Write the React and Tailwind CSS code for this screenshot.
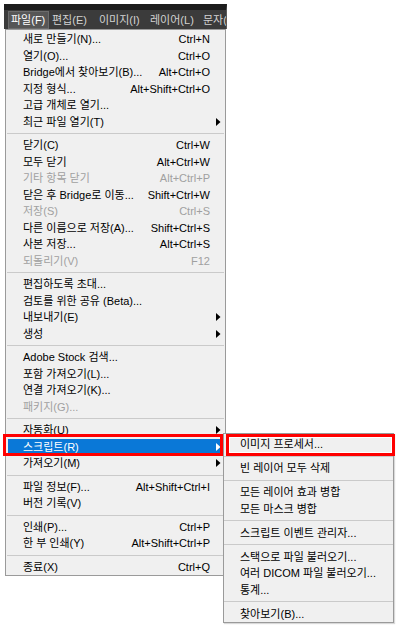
import React from 'react'

// Photoshop "파일" menu with the 스크립트 submenu open
const mainGroups = [
  [
    { label: '새로 만들기(N)...', keys: 'Ctrl+N' },
    { label: '열기(O)...', keys: 'Ctrl+O' },
    { label: 'Bridge에서 찾아보기(B)...', keys: 'Alt+Ctrl+O' },
    { label: '지정 형식...', keys: 'Alt+Shift+Ctrl+O' },
    { label: '고급 개체로 열기...' },
    { label: '최근 파일 열기(T)', sub: true },
  ],
  [
    { label: '닫기(C)', keys: 'Ctrl+W' },
    { label: '모두 닫기', keys: 'Alt+Ctrl+W' },
    { label: '기타 항목 닫기', keys: 'Alt+Ctrl+P', off: true },
    { label: '닫은 후 Bridge로 이동...', keys: 'Shift+Ctrl+W' },
    { label: '저장(S)', keys: 'Ctrl+S', off: true },
    { label: '다른 이름으로 저장(A)...', keys: 'Shift+Ctrl+S' },
    { label: '사본 저장...', keys: 'Alt+Ctrl+S' },
    { label: '되돌리기(V)', keys: 'F12', off: true },
  ],
  [
    { label: '편집하도록 초대...' },
    { label: '검토를 위한 공유 (Beta)...' },
    { label: '내보내기(E)', sub: true },
    { label: '생성', sub: true },
  ],
  [
    { label: 'Adobe Stock 검색...' },
    { label: '포함 가져오기(L)...' },
    { label: '연결 가져오기(K)...' },
    { label: '패키지(G)...', off: true },
  ],
  [
    { label: '자동화(U)', sub: true },
    { label: '스크립트(R)', sub: true, active: true },
    { label: '가져오기(M)', sub: true },
  ],
  [
    { label: '파일 정보(F)...', keys: 'Alt+Shift+Ctrl+I' },
    { label: '버전 기록(V)' },
  ],
  [
    { label: '인쇄(P)...', keys: 'Ctrl+P' },
    { label: '한 부 인쇄(Y)', keys: 'Alt+Shift+Ctrl+P' },
  ],
  [{ label: '종료(X)', keys: 'Ctrl+Q' }],
]

const subGroups = [
  ['이미지 프로세서...'],
  ['빈 레이어 모두 삭제'],
  ['모든 레이어 효과 병합', '모든 마스크 병합'],
  ['스크립트 이벤트 관리자...'],
  ['스택으로 파일 불러오기...', '여러 DICOM 파일 불러오기...', '통계...'],
  ['찾아보기(B)...'],
]

const menuBar = [
  { label: '파일(F)', w: 'w-[41px]', open: true },
  { label: '편집(E)', w: 'w-[47px]' },
  { label: '이미지(I)', w: 'w-[51px]' },
  { label: '레이어(L)', w: 'w-[53px]' },
  { label: '문자(Y)', w: 'w-[50px]' },
]

const Arrow = ({ white }) => (
  <svg width="5" height="8" viewBox="0 0 5 8">
    <polygon points="0,0 4.5,4 0,8" fill={white ? '#ffffff' : '#000000'} />
  </svg>
)

const Separator = ({ className = '' }) => (
  <div className={`flex items-center ${className}`}>
    <div className="h-px w-full bg-[#cacaca]" />
  </div>
)

const MenuRow = ({ item }) => {
  const tone = item.active
    ? 'bg-[#0a78d7] text-white'
    : item.off
      ? 'text-[#a0a0a0]'
      : 'text-black'
  return (
    <div className={`mx-[2px] flex h-[16.5px] items-center pl-[15px] leading-[16.5px] ${tone}`}>
      <span className="flex-1 whitespace-nowrap">{item.label}</span>
      <span className="whitespace-nowrap">{item.keys}</span>
      <span className="flex w-[13px] pl-[6px]">{item.sub && <Arrow white={item.active} />}</span>
    </div>
  )
}

export default function App() {
  return (
    <div
      className="relative h-[627px] w-[400px] overflow-hidden bg-white pt-[4px] text-[11px]"
      style={{ fontFamily: '"Liberation Sans", "Noto Sans CJK KR", sans-serif' }}
    >
      {/* Menu bar */}
      <div className="ml-[4px] flex h-[25px] w-[223px] overflow-hidden whitespace-nowrap border-t-[6px] border-r border-[#1d1d1d] border-r-[#5a5a5a] bg-[#3b3b3b] pl-[4px] pt-[1px] text-[#d2d2d2]">
        {menuBar.map((m) => (
          <div
            key={m.label}
            className={`h-[18px] shrink-0 border px-[2px] leading-[16px] ${m.w} ${
              m.open ? 'border-[#6c6c6c] bg-[#565656] text-white' : 'border-transparent'
            }`}
          >
            {m.label}
          </div>
        ))}
      </div>

      {/* File menu */}
      <div className="ml-[5px] w-[221px] border border-[#9a9a9a] bg-[#f0f0f0] pt-[1px]">
        {mainGroups.map((group, gi) => (
          <div key={gi}>
            {gi > 0 && <Separator className="mx-[1px] h-[7px]" />}
            {group.map((item) => (
              <MenuRow key={item.label} item={item} />
            ))}
          </div>
        ))}
      </div>

      {/* Scripts submenu */}
      <div className="absolute left-[223px] top-[433px] w-[171px] border border-[#9a9a9a] bg-[#f0f0f0] pt-[2px] text-black shadow-[1px_1px_1px_rgba(0,0,0,0.15)]">
        {subGroups.map((group, gi) => (
          <div key={gi}>
            {gi > 0 && <Separator className="h-[7.5px]" />}
            {group.map((label) => (
              <div key={label} className="flex h-[16.5px] items-center whitespace-nowrap pl-[16px] leading-[16.5px]">
                {label}
              </div>
            ))}
          </div>
        ))}
      </div>

      {/* Red call-out boxes */}
      <div className="absolute left-[3px] top-[434px] h-[22px] w-[220px] border-[3px] border-[#ff0000]" />
      <div className="absolute left-[226px] top-[434px] h-[22px] w-[169px] border-[3px] border-[#ff0000] shadow-[inset_0_0_0_1px_#ffffff]" />
    </div>
  )
}
